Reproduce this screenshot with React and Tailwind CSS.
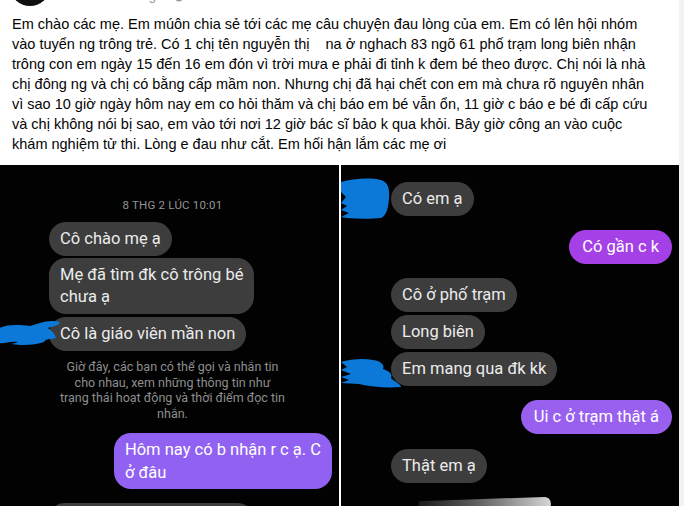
import { Globe } from 'lucide-react';

// Dòng văn bản của bài viết (ngắt dòng cố định như ảnh)
const POST_LINES = [
  'Em chào các mẹ. Em múôn chia sẻ tới các mẹ câu chuyện đau lòng của em. Em có lên hội nhóm',
  'vào tuyển ng trông trẻ. Có 1 chị tên nguyễn thị    na ở nghach 83 ngõ 61 phố trạm long biên nhận',
  'trông con em ngày 15 đến 16 em đón vì trời mưa e phải đi tỉnh k đem bé theo được. Chị nói là nhà',
  'chị đông ng và chị có bằng cấp mầm non. Nhưng chị đã hại chết con em mà chưa rõ nguyên nhân',
  'vì sao 10 giờ ngày hôm nay em co hỏi thăm và chị báo em bé vẫn ổn, 11 giờ c báo e bé đi cấp cứu',
  'và chị không nói bị sao, em vào tới nơi 12 giờ bác sĩ bảo k qua khỏi. Bây giờ công an vào cuộc',
  'khám nghiệm tử thi. Lòng e đau như cắt. Em hối hận lắm các mẹ ơi',
];

function Bubble({ children, className = '' }) {
  return (
    <div
      className={`w-fit rounded-[17px] bg-[#3d3d3d] px-[11px] py-[6px] text-[16.5px] leading-[22px] text-[#ececec] ${className}`}
    >
      {children}
    </div>
  );
}

function Mine({ children, className = '' }) {
  return (
    <div
      className={`ml-auto w-fit rounded-[17px] px-[13px] py-[6px] text-[16.5px] leading-[22px] text-white ${className}`}
    >
      {children}
    </div>
  );
}

// vệt tô xanh che avatar
function Scribble({ className, d, w, h }) {
  return (
    <svg className={`absolute ${className}`} width={w} height={h} viewBox={`0 0 ${w} ${h}`}>
      <path d={d} fill="#0c79d8" />
    </svg>
  );
}

function LeftChat() {
  return (
    <div className="relative flex w-[339px] flex-col overflow-hidden bg-[#020202] font-['Roboto',sans-serif]">
      <div className="mt-[33px] pl-[6px] text-center text-[11.5px] leading-[14px] tracking-[0.2px] text-[#959595]">
        8 THG 2 LÚC 10:01
      </div>
      <div className="ml-[49px] mt-[10px] flex flex-col gap-[2px]">
        <Bubble>Cô chào mẹ ạ</Bubble>
        <Bubble className="rounded-[16px]">
          Mẹ đã tìm đk cô trông bé
          <br />
          chưa ạ
        </Bubble>
        <Bubble className="mt-px">Cô là giáo viên mần non</Bubble>
      </div>
      <div className="mt-[8px] pl-[6px] text-center text-[12.5px] leading-[15.5px] text-[#8e8e8e]">
        Giờ đây, các bạn có thể gọi và nhắn tin
        <br />
        cho nhau, xem những thông tin như
        <br />
        trạng thái hoạt động và thời điểm đọc tin
        <br />
        nhắn.
      </div>
      <Mine className="mr-[7px] mt-[12px] w-[229px] rounded-[16px] bg-[#9162f1] !py-[5px] !px-[11px] leading-[23px]">
        Hôm nay có b nhận r c ạ. C
        <br />
        ở đâu
      </Mine>
      <div className="ml-[49px] mt-[14px] h-[30px] w-[204px] shrink-0 rounded-[17px] bg-[#3d3d3d]" />
      <Scribble
        className="left-0 top-[154px]"
        w={62}
        h={28}
        d="M0 9 C8 5 20 6 30 7 L40 4 C46 2 54 1 60 3 C60 6 54 7 48 9 C52 12 55 15 56 19 C50 21 46 19 44 23 C36 26 22 27 12 25 L18 23 C10 22 4 25 0 24 Z"
      />
    </div>
  );
}

function RightChat() {
  return (
    <div className="relative flex w-[338px] flex-col overflow-hidden bg-[#020202] font-['Roboto',sans-serif]">
      <Bubble className="ml-[50px] mt-[17px]">Có em ạ</Bubble>
      <Mine className="mr-[7px] mt-[14px] bg-[#a53fe6]">Có gần c k</Mine>
      <div className="ml-[50px] mt-[14px] flex flex-col gap-[3px]">
        <Bubble>Cô ở phố trạm</Bubble>
        <Bubble>Long biên</Bubble>
        <Bubble>Em mang qua đk kk</Bubble>
      </div>
      <Mine className="mr-[7px] mt-[14px] bg-[#9960f0]">Ui c ở trạm thật á</Mine>
      <Bubble className="ml-[50px] mt-[15px]">Thật em ạ</Bubble>
      <div className="absolute left-[78px] top-[334px] h-[24px] w-[132px] -rotate-[2deg] rounded-tr-[6px] bg-gradient-to-r from-[#1a1a1a] via-[#6a6a6a] to-[#d6d6d6]" />
      <Scribble
        className="left-0 top-[12px]"
        w={50}
        h={43}
        d="M0 5 C12 2 26 0 40 3 C47 5 49 12 48 22 C47 31 46 38 40 41 C30 42 18 42 6 41 L0 40 L8 36 L0 33 L6 29 L0 26 L5 20 L0 15 Z"
      />
      <Scribble
        className="left-0 top-[191px]"
        w={62}
        h={33}
        d="M0 6 C10 3 22 2 32 4 C40 5 44 9 42 13 C48 15 52 18 50 22 C54 26 60 28 60 31 C46 32 30 31 18 28 L0 27 L8 24 L0 21 L10 18 L0 14 L6 11 Z"
      />
    </div>
  );
}

export default function App() {
  return (
    <div className="flex h-[506px] w-[684px] overflow-hidden bg-white">
      <div className="flex w-[679px] flex-col">
        {/* Header bị cắt */}
        <div className="h-[14px] shrink-0 overflow-hidden">
          <div className="-mt-[34px] flex items-end gap-[28px] pl-[10px]">
            <div className="h-10 w-10 rounded-full bg-[#101010]" />
            <div className="mb-[2px] flex items-center gap-[6px] font-['Liberation_Sans',sans-serif] text-[13px] leading-[16px] text-[#8a8d91]">
              <span>Ẩn danh · 2 giờ</span>
              <Globe size={12} />
            </div>
          </div>
        </div>

        {/* Nội dung bài viết */}
        <div className="shrink-0 pl-[12px] font-['Liberation_Sans',sans-serif] text-[14.5px] leading-[20px] text-[#050505]">
          {POST_LINES.map((line) => (
            <div key={line} className="whitespace-pre">
              {line}
            </div>
          ))}
        </div>

        {/* Ảnh chụp tin nhắn */}
        <div className="mt-[11px] flex min-h-0 flex-1 gap-[2px]">
          <LeftChat />
          <RightChat />
        </div>
      </div>
      <div className="w-[5px] bg-[#f0f2f5]" />
    </div>
  );
}
